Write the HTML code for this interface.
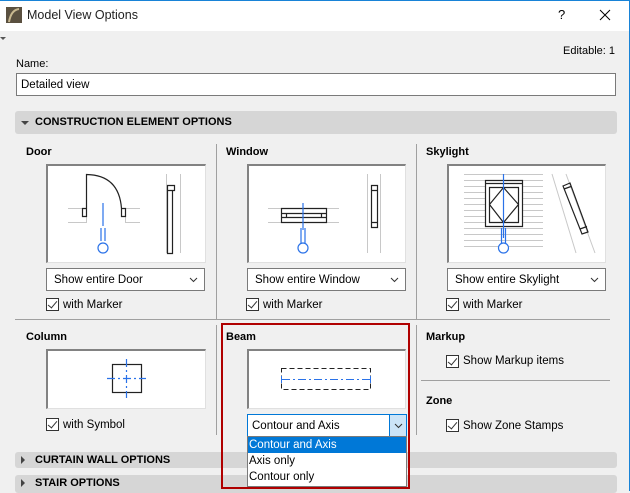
<!DOCTYPE html>
<html><head><meta charset="utf-8"><style>
*{box-sizing:border-box;margin:0;padding:0}
body{width:630px;height:491px;overflow:hidden;background:#f0f0f0;font-family:"Liberation Sans",sans-serif;font-size:11px;color:#000;position:relative}
.a{position:absolute}
.frame{left:0;top:0;width:630px;height:491px;border-top:1px solid #1883d7;border-right:1px solid #1883d7}
.title{left:0;top:1px;width:629px;height:30px;background:#fff}
.b{font-weight:bold}
.box{background:#fff;border:1px solid #e0e0e0;border-top:2px solid #828282;border-left:2px solid #828282}
.dd{background:#fff;border:1px solid #7a7a7a;height:23px;padding:5px 7px;font-size:11.5px}
.chev{position:absolute;right:6px;top:8px}
.cb{width:13px;height:13px;border:1px solid #333;background:#fff}
.cb:after{content:"";position:absolute;left:3px;top:0px;width:4px;height:8px;border-right:1.5px solid #333;border-bottom:1.5px solid #333;transform:rotate(40deg)}
.hdr{background:#d6d6d6;border-radius:3px;font-weight:bold;font-size:11px;padding-left:20px}
.tri{position:absolute;left:6px;width:0;height:0}
.vl{width:1px;background:#a0a0a0}
.hl{height:1px;background:#a0a0a0}
</style></head><body>
<div class="a title"></div>
<svg class="a" style="left:6px;top:7px" width="16" height="16"><rect width="16" height="16" fill="#5a5040"/><path d="M3 15 Q5 3 13 2" stroke="#c8b890" stroke-width="2" fill="none"/></svg>
<div class="a" style="left:27px;top:8px;font-size:12.5px;color:#222">Model View Options</div>
<div class="a" style="left:558px;top:7px;font-size:13px">?</div>
<svg class="a" style="left:599px;top:9px" width="12" height="12"><path d="M1 1L11 11M11 1L1 11" stroke="#000" stroke-width="1"/></svg>
<div class="a" style="left:0;top:37px;width:0;height:0;border-left:3px solid transparent;border-right:3px solid transparent;border-top:3px solid #555"></div>
<div class="a" style="left:563px;top:45px">Editable: 1</div>
<div class="a" style="left:16px;top:58px">Name:</div>
<div class="a" style="left:16px;top:73px;width:600px;height:23px;background:#fff;border:1px solid #7a7a7a;padding:5px 4px;font-size:11.5px">Detailed view</div>
<div class="a hdr" style="left:15px;top:111px;width:602px;height:23px;line-height:23px"><div class="tri" style="top:10px;border-left:4px solid transparent;border-right:4px solid transparent;border-top:4px solid #444"></div>CONSTRUCTION ELEMENT OPTIONS</div>

<div class="a b" style="left:26px;top:146px">Door</div>
<div class="a b" style="left:226px;top:146px">Window</div>
<div class="a b" style="left:426px;top:146px">Skylight</div>
<div class="a vl" style="left:216px;top:144px;height:175px"></div>
<div class="a vl" style="left:416px;top:144px;height:175px"></div>

<div class="a box" style="left:46px;top:164px;width:160px;height:99px"></div>
<svg class="a" style="left:46px;top:164px" width="160" height="99">
<path d="M22 44.5H36M22 58.5H40.5V52M80 44.5H94M94 58.5H79.5V52M120.5 10V89M134.5 10V89" stroke="#c8c8c8" fill="none"/>
<path d="M36.5 44.5H40.5V52.5H36.5Z M75.5 44.5H79.5V52.5H75.5Z M40.5 44.5V10.5 Q73 11 75.5 44.5 M121.5 21.5H128.5V26.5H121.5Z M121.5 26.5V89.5H126.5V26.5" stroke="#222" stroke-width="1.2" fill="none"/>
<path d="M57 39V62M55 64V77M59 64V77" stroke="#2a72e8" stroke-width="1.2"/><circle cx="57" cy="84" r="5" stroke="#2a72e8" fill="#fff" stroke-width="1.2"/>
</svg>

<div class="a box" style="left:247px;top:164px;width:159px;height:99px"></div>
<svg class="a" style="left:247px;top:164px" width="159" height="99">
<path d="M21 44.5H92M21 58.5H92M120.5 10V89M133.5 10V89" stroke="#c8c8c8" fill="none"/>
<path d="M34.5 44.5H79.5V58.5H34.5Z M34.5 49.5H79.5M34.5 53.5H79.5 M39.5 49.5V53.5M74.5 49.5V53.5 M124.5 21.5H130.5V63.5H124.5Z M124.5 26.5H130.5M124.5 58.5H130.5" stroke="#222" stroke-width="1.2" fill="none"/>
<path d="M56 39V66M54 64V80M58 64V80" stroke="#2a72e8" stroke-width="1.2"/><circle cx="56" cy="84" r="5" stroke="#2a72e8" fill="#fff" stroke-width="1.2"/>
</svg>

<div class="a box" style="left:447px;top:164px;width:159px;height:99px"></div>
<svg class="a" style="left:447px;top:164px" width="159" height="99">
<g stroke="#c8c8c8"><path d="M17 10.5H96M17 16.5H96M17 22.5H96M17 28.5H96M17 34.5H96M17 40.5H96M17 46.5H96M17 52.5H96M17 58.5H96M17 64.5H96M17 70.5H96M17 76.5H96M17 82.5H96M105 10L129 89M119 10L148 89"/></g>
<path d="M38.5 16.5H75.5V62.5H38.5Z" fill="#fff" stroke="#222" stroke-width="1.2"/>
<path d="M38.5 19.5H75.5 M42.5 23.5H71.5V58.5H42.5Z M56.5 23.5L71.5 40.5L56.5 58.5L42.5 40.5Z M116 22L123 19L141 68L135 70Z M117 25L124 22.5M133 65L140 62.5" stroke="#222" stroke-width="1.2" fill="none"/>
<path d="M56.5 10V74M54.5 64V79M58.5 64V79" stroke="#2a72e8" stroke-width="1.2"/><circle cx="56.5" cy="84" r="5" stroke="#2a72e8" fill="#fff" stroke-width="1.2"/>
</svg>

<div class="a dd" style="left:46px;top:268px;width:159px">Show entire Door<svg class="chev" width="9" height="6"><path d="M1 1L4.5 4.5L8 1" stroke="#333" fill="none"/></svg></div>
<div class="a dd" style="left:247px;top:268px;width:159px">Show entire Window<svg class="chev" width="9" height="6"><path d="M1 1L4.5 4.5L8 1" stroke="#333" fill="none"/></svg></div>
<div class="a dd" style="left:447px;top:268px;width:159px">Show entire Skylight<svg class="chev" width="9" height="6"><path d="M1 1L4.5 4.5L8 1" stroke="#333" fill="none"/></svg></div>
<div class="a cb" style="left:46px;top:298px"></div><div class="a" style="left:63px;top:299px;font-size:11.5px">with Marker</div>
<div class="a cb" style="left:246px;top:298px"></div><div class="a" style="left:263px;top:299px;font-size:11.5px">with Marker</div>
<div class="a cb" style="left:446px;top:298px"></div><div class="a" style="left:463px;top:299px;font-size:11.5px">with Marker</div>
<div class="a hl" style="left:15px;top:319px;width:595px"></div>

<div class="a b" style="left:26px;top:331px">Column</div>
<div class="a box" style="left:46px;top:349px;width:160px;height:60px"></div>
<svg class="a" style="left:46px;top:349px" width="160" height="60">
<rect x="66.5" y="15.5" width="29" height="28" stroke="#222" stroke-width="1.2" fill="none"/>
<path d="M80.5 10V49M61 29.5H100" stroke="#2a72e8" stroke-dasharray="8 3 2 3" stroke-width="1.2"/>
</svg>
<div class="a cb" style="left:46px;top:418px"></div><div class="a" style="left:63px;top:419px;font-size:11.5px">with Symbol</div>

<div class="a vl" style="left:216px;top:325px;height:110px"></div>
<div class="a b" style="left:226px;top:331px">Beam</div>
<div class="a box" style="left:247px;top:349px;width:159px;height:60px"></div>
<svg class="a" style="left:247px;top:349px" width="159" height="60">
<rect x="34.5" y="19.5" width="89" height="21" stroke="#222" stroke-dasharray="5 3" fill="none"/>
<path d="M35 30.5H123M34.5 27V34M123.5 27V34" stroke="#2a72e8" stroke-dasharray="8 3 2 3"/>
</svg>

<div class="a vl" style="left:416px;top:325px;height:110px"></div>
<div class="a b" style="left:426px;top:331px">Markup</div>
<div class="a cb" style="left:446px;top:355px"></div><div class="a" style="left:463px;top:355px;font-size:11.5px">Show Markup items</div>
<div class="a hl" style="left:421px;top:380px;width:189px"></div>
<div class="a b" style="left:426px;top:395px">Zone</div>
<div class="a cb" style="left:446px;top:419px"></div><div class="a" style="left:463px;top:420px;font-size:11.5px">Show Zone Stamps</div>

<div class="a hdr" style="left:15px;top:452px;width:602px;height:16px;line-height:16px"><div class="tri" style="top:4px;border-top:4px solid transparent;border-bottom:4px solid transparent;border-left:4px solid #444"></div>CURTAIN WALL OPTIONS</div>
<div class="a hdr" style="left:15px;top:475px;width:602px;height:18px;line-height:16px"><div class="tri" style="top:4px;border-top:4px solid transparent;border-bottom:4px solid transparent;border-left:4px solid #444"></div>STAIR OPTIONS</div>

<div class="a" style="left:247px;top:414px;width:160px;height:23px;background:#fff;border:1px solid #0078d7;padding:5px 4px;font-size:11.5px">Contour and Axis</div>
<div class="a" style="left:389px;top:415px;width:17px;height:21px;background:#cce4f7;border-left:1px solid #0078d7"><svg style="position:absolute;left:4px;top:8px" width="9" height="6"><path d="M1 1L4.5 4.5L8 1" stroke="#333" fill="none"/></svg></div>
<div class="a" style="left:247px;top:436px;width:160px;height:51px;background:#fff;border:1px solid #7a7a7a;font-size:11.5px">
<div style="background:#0078d7;color:#fff;height:16px;padding:2px 1px">Contour and Axis</div>
<div style="height:16px;padding:2px 1px">Axis only</div>
<div style="height:16px;padding:2px 1px">Contour only</div></div>
<div class="a" style="left:221px;top:323px;width:189px;height:166px;border:2px solid #b00000"></div>
<div class="a frame"></div>
</body></html>
